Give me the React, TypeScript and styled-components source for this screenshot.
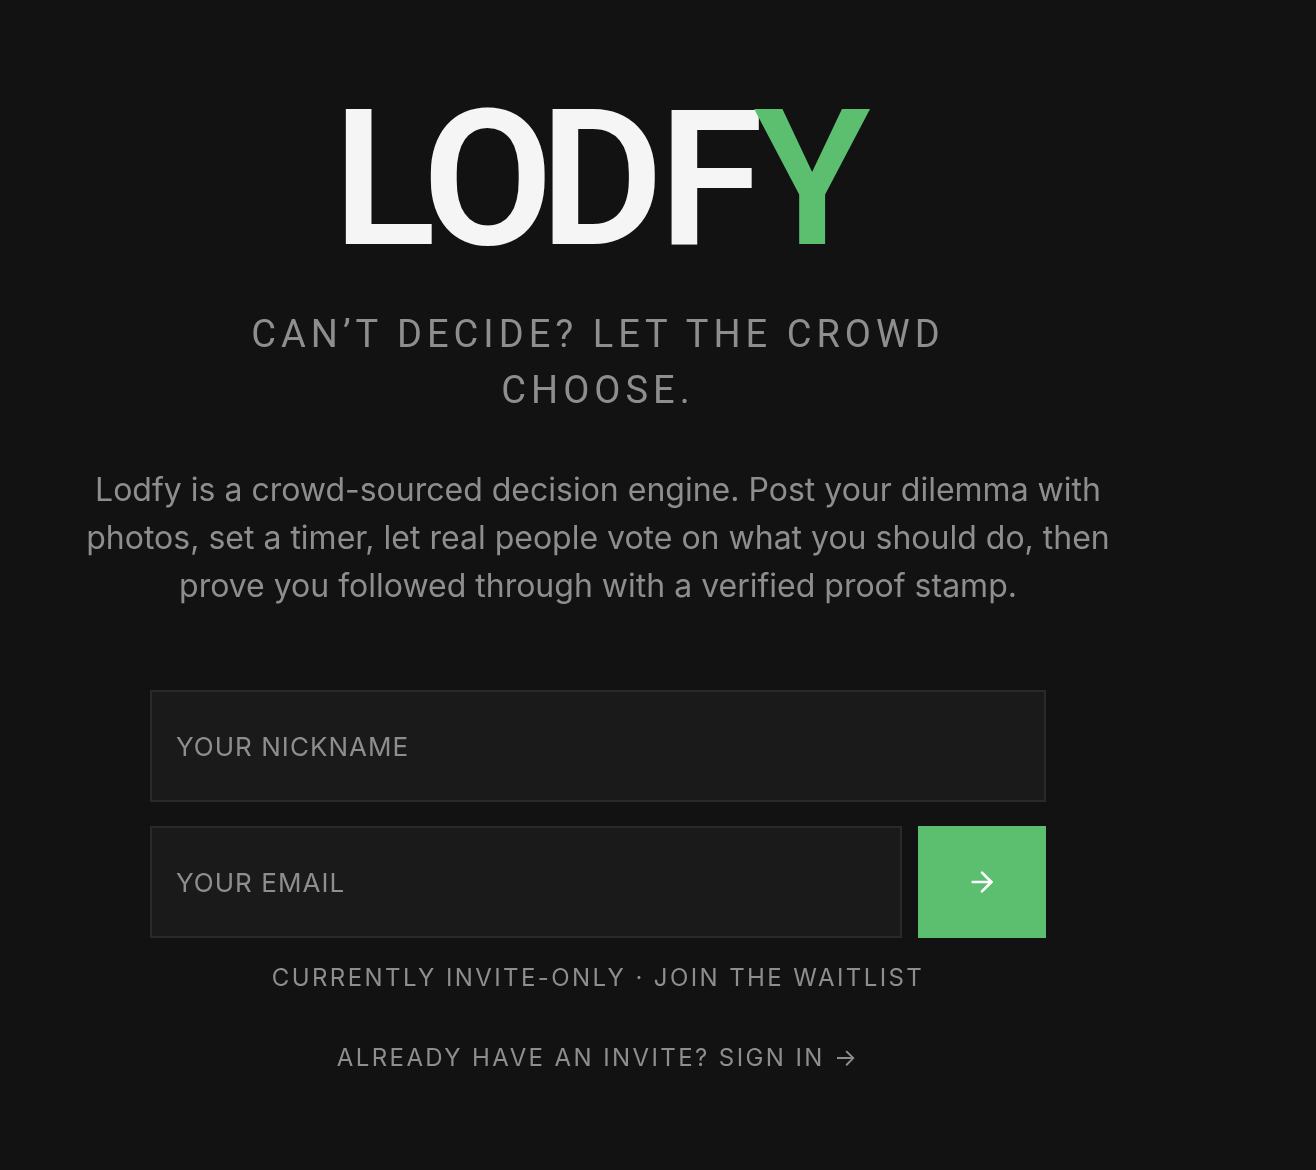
import { createGlobalStyle } from 'styled-components';
import styled from 'styled-components';
import { ArrowRight } from 'lucide-react';

const GlobalStyle = createGlobalStyle`
  html,
  body {
    margin: 0;
    background: #121212;
  }

  body {
    font-family: 'Inter', 'Liberation Sans', sans-serif;
  }

  * {
    box-sizing: border-box;
  }
`;

const Page = styled.main`
  width: 1196px;
  height: 1170px;
  padding-top: 75px;
  display: flex;
  flex-direction: column;
  align-items: center;
  overflow: hidden;
  will-change: transform;
`;

const Logo = styled.h1`
  margin: 0;
  height: 205px;
  font-family: 'Roboto', sans-serif;
  font-size: 190px;
  font-weight: 600;
  line-height: 208px;
  letter-spacing: -0.04em;
  color: #f5f5f5;
  white-space: nowrap;
`;

const LogoLetter = styled.span<{ $kern?: number; $accent?: boolean }>`
  margin-right: ${({ $kern }) => $kern ?? 0}px;
  color: ${({ $accent }) => ($accent ? '#5cbf70' : 'inherit')};
`;

const Tagline = styled.h2`
  margin: 26px 0 0;
  width: 760px;
  font-family: 'Roboto', sans-serif;
  font-size: 38px;
  font-weight: 400;
  line-height: 56px;
  letter-spacing: 0.132em;
  text-align: center;
  text-transform: uppercase;
  color: #8e8e8e;
`;

const Description = styled.p`
  margin: 48px 0 0;
  width: 1040px;
  font-size: 32px;
  line-height: 48px;
  text-align: center;
  color: #8e8e8e;
`;

const Form = styled.form`
  margin-top: 80px;
  width: 896px;
  display: flex;
  flex-direction: column;
  gap: 24px;
`;

const Row = styled.div`
  display: flex;
  gap: 16px;
`;

const Input = styled.input`
  flex: 1 0 112px;
  min-width: 0;
  height: 112px;
  padding: 0 24px;
  background: #1a1a1a;
  border: 2px solid #2a2a2a;
  border-radius: 0;
  outline: none;
  font-family: 'Inter', sans-serif;
  font-size: 26px;
  letter-spacing: 0.04em;
  color: #f5f5f5;

  &::placeholder {
    color: #8e8e8e;
    opacity: 1;
  }
`;

const Submit = styled.button`
  width: 128px;
  height: 112px;
  padding: 0;
  display: flex;
  align-items: center;
  justify-content: center;
  background: #5cbf70;
  border: none;
  color: #ffffff;
`;

const Note = styled.p`
  margin: 24px 0 0;
  font-size: 24px;
  line-height: 32px;
  letter-spacing: 0.1em;
  text-transform: uppercase;
  color: #8e8e8e;
`;

const SignIn = styled.a`
  margin-top: 48px;
  font-size: 24px;
  line-height: 32px;
  letter-spacing: 0.1em;
  text-transform: uppercase;
  color: #8e8e8e;
`;

export default function App() {
  return (
    <>
      <GlobalStyle />
      <Page>
        <Logo>
          <LogoLetter>L</LogoLetter>
          <LogoLetter $kern={-6}>O</LogoLetter>
          <LogoLetter $kern={3}>D</LogoLetter>
          <LogoLetter $kern={-2}>F</LogoLetter>
          <LogoLetter $accent>Y</LogoLetter>
        </Logo>
        <Tagline>Can’t decide? Let the crowd choose.</Tagline>
        <Description>
          Lodfy is a crowd-sourced decision engine. Post your dilemma with photos, set a timer, let
          real people vote on what you should do, then prove you followed through with a verified
          proof stamp.
        </Description>
        <Form>
          <Input placeholder="YOUR NICKNAME" />
          <Row>
            <Input placeholder="YOUR EMAIL" />
            <Submit type="button" aria-label="Join">
              <ArrowRight size={32} strokeWidth={2} />
            </Submit>
          </Row>
        </Form>
        <Note>Currently invite-only · Join the waitlist</Note>
        <SignIn>Already have an invite? Sign in →</SignIn>
      </Page>
    </>
  );
}
